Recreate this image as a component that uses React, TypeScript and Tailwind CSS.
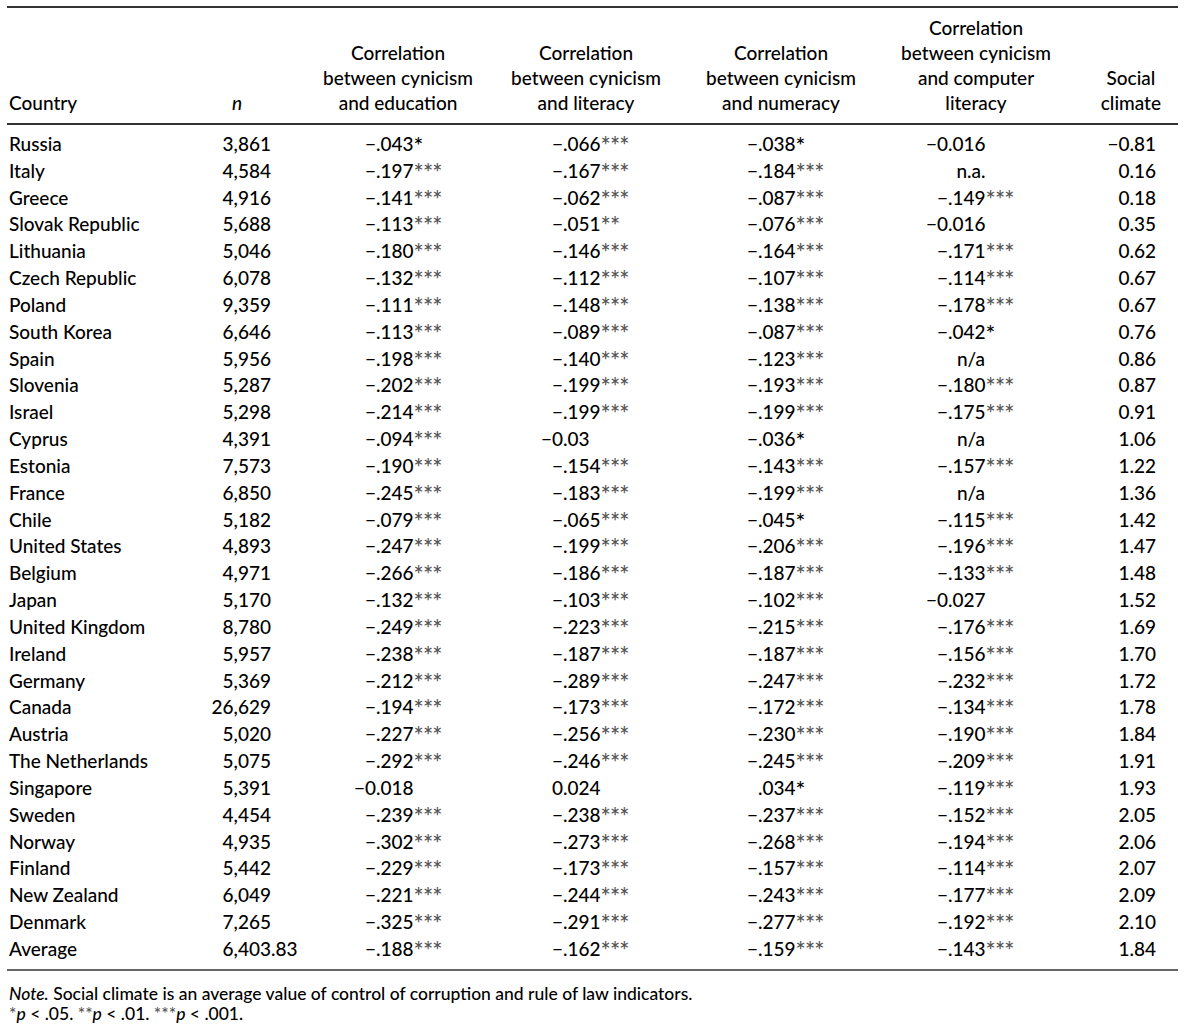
import React from "react";

type Row = [string, string, string, string, string, string, string];

const rows: Row[] = [
  ["Russia", "3,861", "−.043*", "−.066***", "−.038*", "−0.016", "−0.81"],
  ["Italy", "4,584", "−.197***", "−.167***", "−.184***", "n.a.", "0.16"],
  ["Greece", "4,916", "−.141***", "−.062***", "−.087***", "−.149***", "0.18"],
  ["Slovak Republic", "5,688", "−.113***", "−.051**", "−.076***", "−0.016", "0.35"],
  ["Lithuania", "5,046", "−.180***", "−.146***", "−.164***", "−.171***", "0.62"],
  ["Czech Republic", "6,078", "−.132***", "−.112***", "−.107***", "−.114***", "0.67"],
  ["Poland", "9,359", "−.111***", "−.148***", "−.138***", "−.178***", "0.67"],
  ["South Korea", "6,646", "−.113***", "−.089***", "−.087***", "−.042*", "0.76"],
  ["Spain", "5,956", "−.198***", "−.140***", "−.123***", "n/a", "0.86"],
  ["Slovenia", "5,287", "−.202***", "−.199***", "−.193***", "−.180***", "0.87"],
  ["Israel", "5,298", "−.214***", "−.199***", "−.199***", "−.175***", "0.91"],
  ["Cyprus", "4,391", "−.094***", "−0.03", "−.036*", "n/a", "1.06"],
  ["Estonia", "7,573", "−.190***", "−.154***", "−.143***", "−.157***", "1.22"],
  ["France", "6,850", "−.245***", "−.183***", "−.199***", "n/a", "1.36"],
  ["Chile", "5,182", "−.079***", "−.065***", "−.045*", "−.115***", "1.42"],
  ["United States", "4,893", "−.247***", "−.199***", "−.206***", "−.196***", "1.47"],
  ["Belgium", "4,971", "−.266***", "−.186***", "−.187***", "−.133***", "1.48"],
  ["Japan", "5,170", "−.132***", "−.103***", "−.102***", "−0.027", "1.52"],
  ["United Kingdom", "8,780", "−.249***", "−.223***", "−.215***", "−.176***", "1.69"],
  ["Ireland", "5,957", "−.238***", "−.187***", "−.187***", "−.156***", "1.70"],
  ["Germany", "5,369", "−.212***", "−.289***", "−.247***", "−.232***", "1.72"],
  ["Canada", "26,629", "−.194***", "−.173***", "−.172***", "−.134***", "1.78"],
  ["Austria", "5,020", "−.227***", "−.256***", "−.230***", "−.190***", "1.84"],
  ["The Netherlands", "5,075", "−.292***", "−.246***", "−.245***", "−.209***", "1.91"],
  ["Singapore", "5,391", "−0.018", "0.024", ".034*", "−.119***", "1.93"],
  ["Sweden", "4,454", "−.239***", "−.238***", "−.237***", "−.152***", "2.05"],
  ["Norway", "4,935", "−.302***", "−.273***", "−.268***", "−.194***", "2.06"],
  ["Finland", "5,442", "−.229***", "−.173***", "−.157***", "−.114***", "2.07"],
  ["New Zealand", "6,049", "−.221***", "−.244***", "−.243***", "−.177***", "2.09"],
  ["Denmark", "7,265", "−.325***", "−.291***", "−.277***", "−.192***", "2.10"],
  ["Average", "6,403.83", "−.188***", "−.162***", "−.159***", "−.143***", "1.84"],
];

function split(v: string): [string, string, string] {
  const m = v.match(/^([^*]*?)(\*+)?$/);
  const body = m ? m[1] : v;
  const stars = m && m[2] ? m[2] : "";
  const i = body.indexOf(".");
  if (i < 0) return [body, "", stars];
  return [body.slice(0, i), body.slice(i), stars];
}

function Stars({ s }: { s: string }) {
  if (!s) return null;
  if (s.length === 1) return <span className="text-[23px] leading-[0] relative top-[3px]">{s}</span>;
  return <span className="text-[24px] leading-[0] text-[#555] relative top-[4px] tracking-[-0.8px]">{s}</span>;
}

function Dec({ v, intW, fracW }: { v: string; intW: string; fracW: string }) {
  const [a, b, s] = split(v);
  return (
    <>
      <span className={`${intW} shrink-0 text-right whitespace-nowrap`}>{a}</span>
      <span className={`${fracW} shrink-0 text-left whitespace-nowrap`}>
        {b}
        <Stars s={s} />
      </span>
    </>
  );
}

function HeadCell({ lines, w, align = "center" }: { lines: string[]; w: string; align?: "center" | "start" }) {
  return (
    <div className={`${w} shrink-0 flex flex-col ${align === "center" ? "items-center" : "items-start"}`}>
      {lines.map((l, i) => (
        <div key={i} className="whitespace-nowrap leading-[25px]">
          {l}
        </div>
      ))}
    </div>
  );
}

export default function App() {
  return (
    <div className="w-[1190px] h-[1035px] bg-white text-black font-['Lato',sans-serif] font-medium text-[19px] overflow-hidden">
      <div className="ml-[7px] w-[1171px] pt-[6px]">
        <div className="h-[2px] bg-[#333]" />
        <div className="h-[115px] flex items-end pb-[8px] pl-[2px]">
          <HeadCell lines={["Country"]} w="w-[191px]" align="start" />
          <div className="w-[74px] shrink-0 flex flex-col items-center">
            <div className="whitespace-nowrap leading-[25px] italic">n</div>
          </div>
          <HeadCell lines={["Correlation", "between cynicism", "and education"]} w="w-[248px]" />
          <HeadCell lines={["Correlation", "between cynicism", "and literacy"]} w="w-[128px]" />
          <HeadCell lines={["Correlation", "between cynicism", "and numeracy"]} w="w-[262px]" />
          <HeadCell lines={["Correlation", "between cynicism", "and computer", "literacy"]} w="w-[128px]" />
          <div className="w-[121px] shrink-0 flex justify-end">
            <div className="flex flex-col items-center">
              <div className="whitespace-nowrap leading-[25px]">Social</div>
              <div className="whitespace-nowrap leading-[25px]">climate</div>
            </div>
          </div>
        </div>
        <div className="h-[2px] bg-[#333]" />
        <div className="pt-[6px] pb-[6px]">
          {rows.map((r) => (
            <div key={r[0]} className="flex h-[26.83px] leading-[26.83px] pl-[2px]">
              <span className="w-[191px] shrink-0 whitespace-nowrap">{r[0]}</span>
              <Dec v={r[1]} intW="w-[71px]" fracW="w-[59px]" />
              <Dec v={r[2]} intW="w-[46px]" fracW="w-[124px]" />
              <Dec v={r[3]} intW="w-[63px]" fracW="w-[132px]" />
              <Dec v={r[4]} intW="w-[63px]" fracW="w-[137px]" />
              {r[5] === "n.a." || r[5] === "n/a" ? (
                <span className="w-[160px] shrink-0 text-center pr-[8px] whitespace-nowrap">{r[5]}</span>
              ) : (
                <Dec v={r[5]} intW="w-[53px]" fracW="w-[107px]" />
              )}
              <span className="w-[101px] shrink-0 text-right whitespace-nowrap">{r[6]}</span>
            </div>
          ))}
        </div>
        <div className="h-[2px] bg-[#666]" />
        <div className="pt-[13px] pl-[2px] text-[17.5px] leading-[20px]">
          <div className="whitespace-nowrap">
            <span className="italic">Note.</span> Social climate is an average value of control of corruption and rule of law indicators.
          </div>
          <div className="whitespace-nowrap">
            <span className="text-[#555]">*</span>
            <span className="italic">p</span> &lt; .05. <span className="text-[#555]">**</span>
            <span className="italic">p</span> &lt; .01. <span className="text-[#555]">***</span>
            <span className="italic">p</span> &lt; .001.
          </div>
        </div>
      </div>
    </div>
  );
}
